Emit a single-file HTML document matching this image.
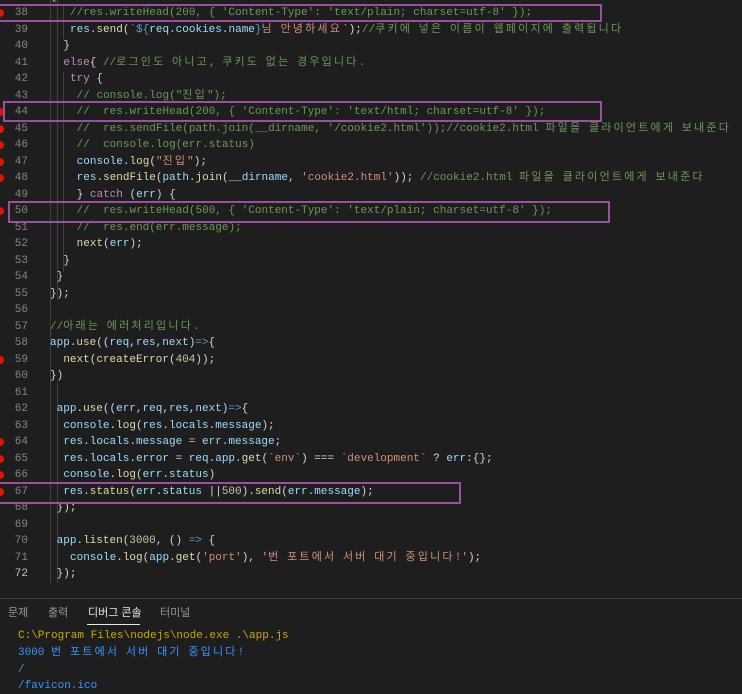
<!DOCTYPE html>
<html><head><meta charset="utf-8"><style>
body{margin:0;width:742px;height:692px;background:#1e1e1e;overflow:hidden;position:relative;font-family:"Liberation Mono","Noto Sans CJK KR",monospace;font-size:11px;}
.ln{position:absolute;left:0;width:28px;text-align:right;color:#858585;height:16.5px;line-height:16.5px}
.cd{position:absolute;left:50px;white-space:pre;color:#d4d4d4;height:16.5px;line-height:16.5px}
.c{color:#6a9955}.s{color:#ce9178}.v{color:#9cdcfe}.f{color:#dcdcaa}.n{color:#b5cea8}.k{color:#c586c0}.b{color:#569cd6}
.ko{letter-spacing:2.2px}
.bp{position:absolute;left:-4px;width:8px;height:8px;border-radius:50%;background:#e51400}
.box{position:absolute;border:2px solid #9b4f9f;box-sizing:border-box}
.guide{position:absolute;width:1px;background:#404040}
.tab{position:absolute;top:606px;font-family:"Liberation Sans","Noto Sans CJK KR",sans-serif;font-size:11px;color:#969696;line-height:14px}
.out{position:absolute;left:18px;white-space:pre;font-size:11px;line-height:16px;height:16px}
</style></head><body>
<div class="guide" style="left:50px;top:0;height:583px"></div>
<div class="guide" style="left:57px;top:0;height:300px"></div>
<div class="guide" style="left:57px;top:383px;height:200px"></div>
<div class="guide" style="left:63px;top:5px;height:34px"></div>
<div class="guide" style="left:63px;top:72px;height:200px"></div>

<div id="lines"></div>
<script>
const L=[
[37,0,'{'],
[38,3,'<span class="c">//res.writeHead(200, { \'Content-Type\': \'text/plain; charset=utf-8\' });</span>'],
[39,3,'<span class="v">res</span>.<span class="f">send</span>(<span class="s">`</span><span class="b">${</span><span class="v">req</span>.<span class="v">cookies</span>.<span class="v">name</span><span class="b">}</span><span class="s">님 안녕하세요`</span>);<span class="c">//쿠키에 넣은 이름이 웹페이지에 출력됩니다</span>'],
[40,2,'}'],
[41,2,'<span class="k">else</span>{ <span class="c">//로그인도 아니고, 쿠키도 없는 경우입니다.</span>'],
[42,3,'<span class="k">try</span> {'],
[43,4,'<span class="c">// console.log("진입");</span>'],
[44,4,'<span class="c">//  res.writeHead(200, { \'Content-Type\': \'text/html; charset=utf-8\' });</span>'],
[45,4,'<span class="c">//  res.sendFile(path.join(__dirname, \'/cookie2.html\'));//cookie2.html 파일을 클라이언트에게 보내준다</span>'],
[46,4,'<span class="c">//  console.log(err.status)</span>'],
[47,4,'<span class="v">console</span>.<span class="f">log</span>(<span class="s">"진입"</span>);'],
[48,4,'<span class="v">res</span>.<span class="f">sendFile</span>(<span class="v">path</span>.<span class="f">join</span>(<span class="v">__dirname</span>, <span class="s">\'cookie2.html\'</span>)); <span class="c">//cookie2.html 파일을 클라이언트에게 보내준다</span>'],
[49,4,'} <span class="k">catch</span> (<span class="v">err</span>) {'],
[50,4,'<span class="c">//  res.writeHead(500, { \'Content-Type\': \'text/plain; charset=utf-8\' });</span>'],
[51,4,'<span class="c">//  res.end(err.message);</span>'],
[52,4,'<span class="f">next</span>(<span class="v">err</span>);'],
[53,2,'}'],[54,1,'}'],[55,0,'});'],[56,0,''],
[57,0,'<span class="c">//아래는 에러처리입니다.</span>'],
[58,0,'<span class="v">app</span>.<span class="f">use</span>((<span class="v">req</span>,<span class="v">res</span>,<span class="v">next</span>)<span class="b">=&gt;</span>{'],
[59,2,'<span class="f">next</span>(<span class="f">createError</span>(<span class="n">404</span>));'],
[60,0,'})'],[61,0,''],
[62,1,'<span class="v">app</span>.<span class="f">use</span>((<span class="v">err</span>,<span class="v">req</span>,<span class="v">res</span>,<span class="v">next</span>)<span class="b">=&gt;</span>{'],
[63,2,'<span class="v">console</span>.<span class="f">log</span>(<span class="v">res</span>.<span class="v">locals</span>.<span class="v">message</span>);'],
[64,2,'<span class="v">res</span>.<span class="v">locals</span>.<span class="v">message</span> = <span class="v">err</span>.<span class="v">message</span>;'],
[65,2,'<span class="v">res</span>.<span class="v">locals</span>.<span class="v">error</span> = <span class="v">req</span>.<span class="v">app</span>.<span class="f">get</span>(<span class="s">`env`</span>) === <span class="s">`development`</span> ? <span class="v">err</span>:{};'],
[66,2,'<span class="v">console</span>.<span class="f">log</span>(<span class="v">err</span>.<span class="v">status</span>)'],
[67,2,'<span class="v">res</span>.<span class="f">status</span>(<span class="v">err</span>.<span class="v">status</span> ||<span class="n">500</span>).<span class="f">send</span>(<span class="v">err</span>.<span class="v">message</span>);'],
[68,1,'});'],[69,0,''],
[70,1,'<span class="v">app</span>.<span class="f">listen</span>(<span class="n">3000</span>, () <span class="b">=&gt;</span> {'],
[71,3,'<span class="v">console</span>.<span class="f">log</span>(<span class="v">app</span>.<span class="f">get</span>(<span class="s">\'port\'</span>), <span class="s">\'번 포트에서 서버 대기 중입니다!\'</span>);'],
[72,1,'});']
];
const bps=[38,44,45,46,47,48,50,59,64,65,66,67];
const ko=t=>t.replace(/[가-힣]+/g,m=>'<span class="ko">'+m+'</span>');
let h='';
for(const [n,ind,t] of L){
 const top=5+(n-38)*16.5;
 h+=`<div class="ln" style="top:${top}px;${n==72?'color:#c6c6c6':''}">${n}</div>`;
 h+=`<div class="cd" style="top:${top}px;left:${50+ind*6.67}px">${ko(t)}</div>`;
 if(bps.includes(n)) h+=`<div class="bp" style="top:${top+4}px"></div>`;
}
document.getElementById('lines').innerHTML=h;
</script>
<div class="box" style="left:-2px;top:4px;width:604px;height:18px"></div>
<div class="box" style="left:3px;top:101px;width:599px;height:21px"></div>
<div class="box" style="left:8px;top:201px;width:602px;height:22px"></div>
<div class="box" style="left:-2px;top:482px;width:463px;height:22px"></div>

<div style="position:absolute;left:0;top:598px;width:742px;height:1px;background:#3c3c3c"></div>
<div class="tab" style="left:8px">문제</div>
<div class="tab" style="left:48px">출력</div>
<div class="tab" style="left:88px;color:#e7e7e7">디버그 콘솔</div>
<div style="position:absolute;left:87px;top:624px;width:53px;height:1px;background:#e7e7e7"></div>
<div class="tab" style="left:160px">터미널</div>
<div class="out" style="top:628px;color:#cca700">C:\Program Files\nodejs\node.exe .\app.js</div>
<div class="out" style="top:645px;color:#3794ff">3000 <span class="ko">번</span> <span class="ko">포트에서</span> <span class="ko">서버</span> <span class="ko">대기</span> <span class="ko">중입니다</span>!</div>
<div class="out" style="top:662px;color:#3794ff">/</div>
<div class="out" style="top:678px;color:#3794ff">/favicon.ico</div>
</body></html>
